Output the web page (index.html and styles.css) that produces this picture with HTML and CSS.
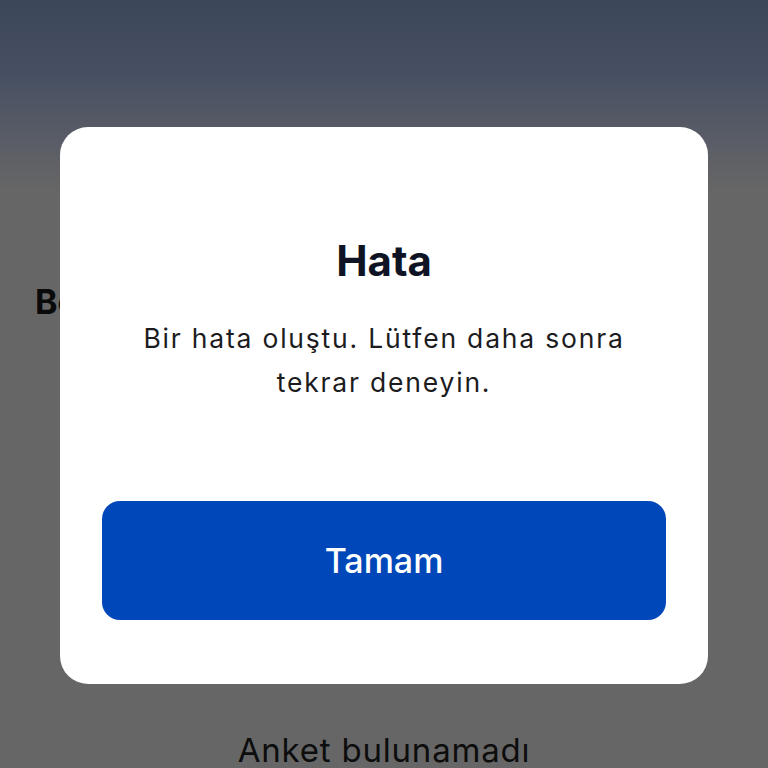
FILE: index.html
```html
<!DOCTYPE html>
<html lang="tr">
<head>
<meta charset="utf-8">
<title>Hata</title>
<link rel="stylesheet" href="styles.css">
</head>
<body>
<div class="page">
  <header class="top"></header>
  <main class="content">
    <h2 class="section-title">Bekleyen Anketler</h2>
    <p class="empty">Anket bulunamadı</p>
  </main>
</div>
<div class="dialog" role="alertdialog">
  <h1 class="dialog-title">Hata</h1>
  <p class="dialog-text">Bir hata oluştu. Lütfen daha sonra tekrar deneyin.</p>
  <button class="dialog-btn">Tamam</button>
</div>
</body>
</html>
```
FILE: styles.css
```css
html, body {
  margin: 0;
  padding: 0;
  width: 768px;
  height: 768px;
  overflow: hidden;
  background: #666666;
  font-family: Inter, "Noto Sans", sans-serif;
}
.page {
  display: flex;
  flex-direction: column;
  height: 768px;
}
.top {
  height: 190px;
  background: linear-gradient(180deg, #3c4659 0%, #475062 40%, #5a5d66 75%, #666666 100%);
}
.content {
  display: flex;
  flex-direction: column;
  flex: 1;
}
.section-title {
  margin: 92px 0 0 35px;
  font-size: 34px;
  font-weight: 700;
  line-height: 40px;
  color: #0a0a0a;
  white-space: nowrap;
}
.empty {
  margin: auto 0 0 0;
  text-align: center;
  font-size: 33px;
  letter-spacing: 0.8px;
  line-height: 40px;
  color: #0d0d0d;
  transform: translateY(2px);
}
.dialog {
  position: absolute;
  left: 60px;
  top: 127px;
  width: 648px;
  height: 557px;
  box-sizing: border-box;
  padding: 109px 42px 64px;
  background: #ffffff;
  border-radius: 28px;
  display: flex;
  flex-direction: column;
  align-items: center;
}
.dialog-title {
  margin: 0;
  font-size: 42px;
  line-height: 50px;
  font-weight: 700;
  color: #0f1424;
}
.dialog-text {
  margin: 30px 0 0;
  width: 520px;
  text-align: center;
  font-size: 26.5px;
  letter-spacing: 1.8px;
  line-height: 44px;
  color: #1c1c1e;
}
.dialog-btn {
  margin-top: auto;
  width: 564px;
  height: 119px;
  border: none;
  border-radius: 18px;
  background: #0048ba;
  color: #ffffff;
  font-family: Inter, "Noto Sans", sans-serif;
  font-size: 34px;
  font-weight: 500;
}
```
